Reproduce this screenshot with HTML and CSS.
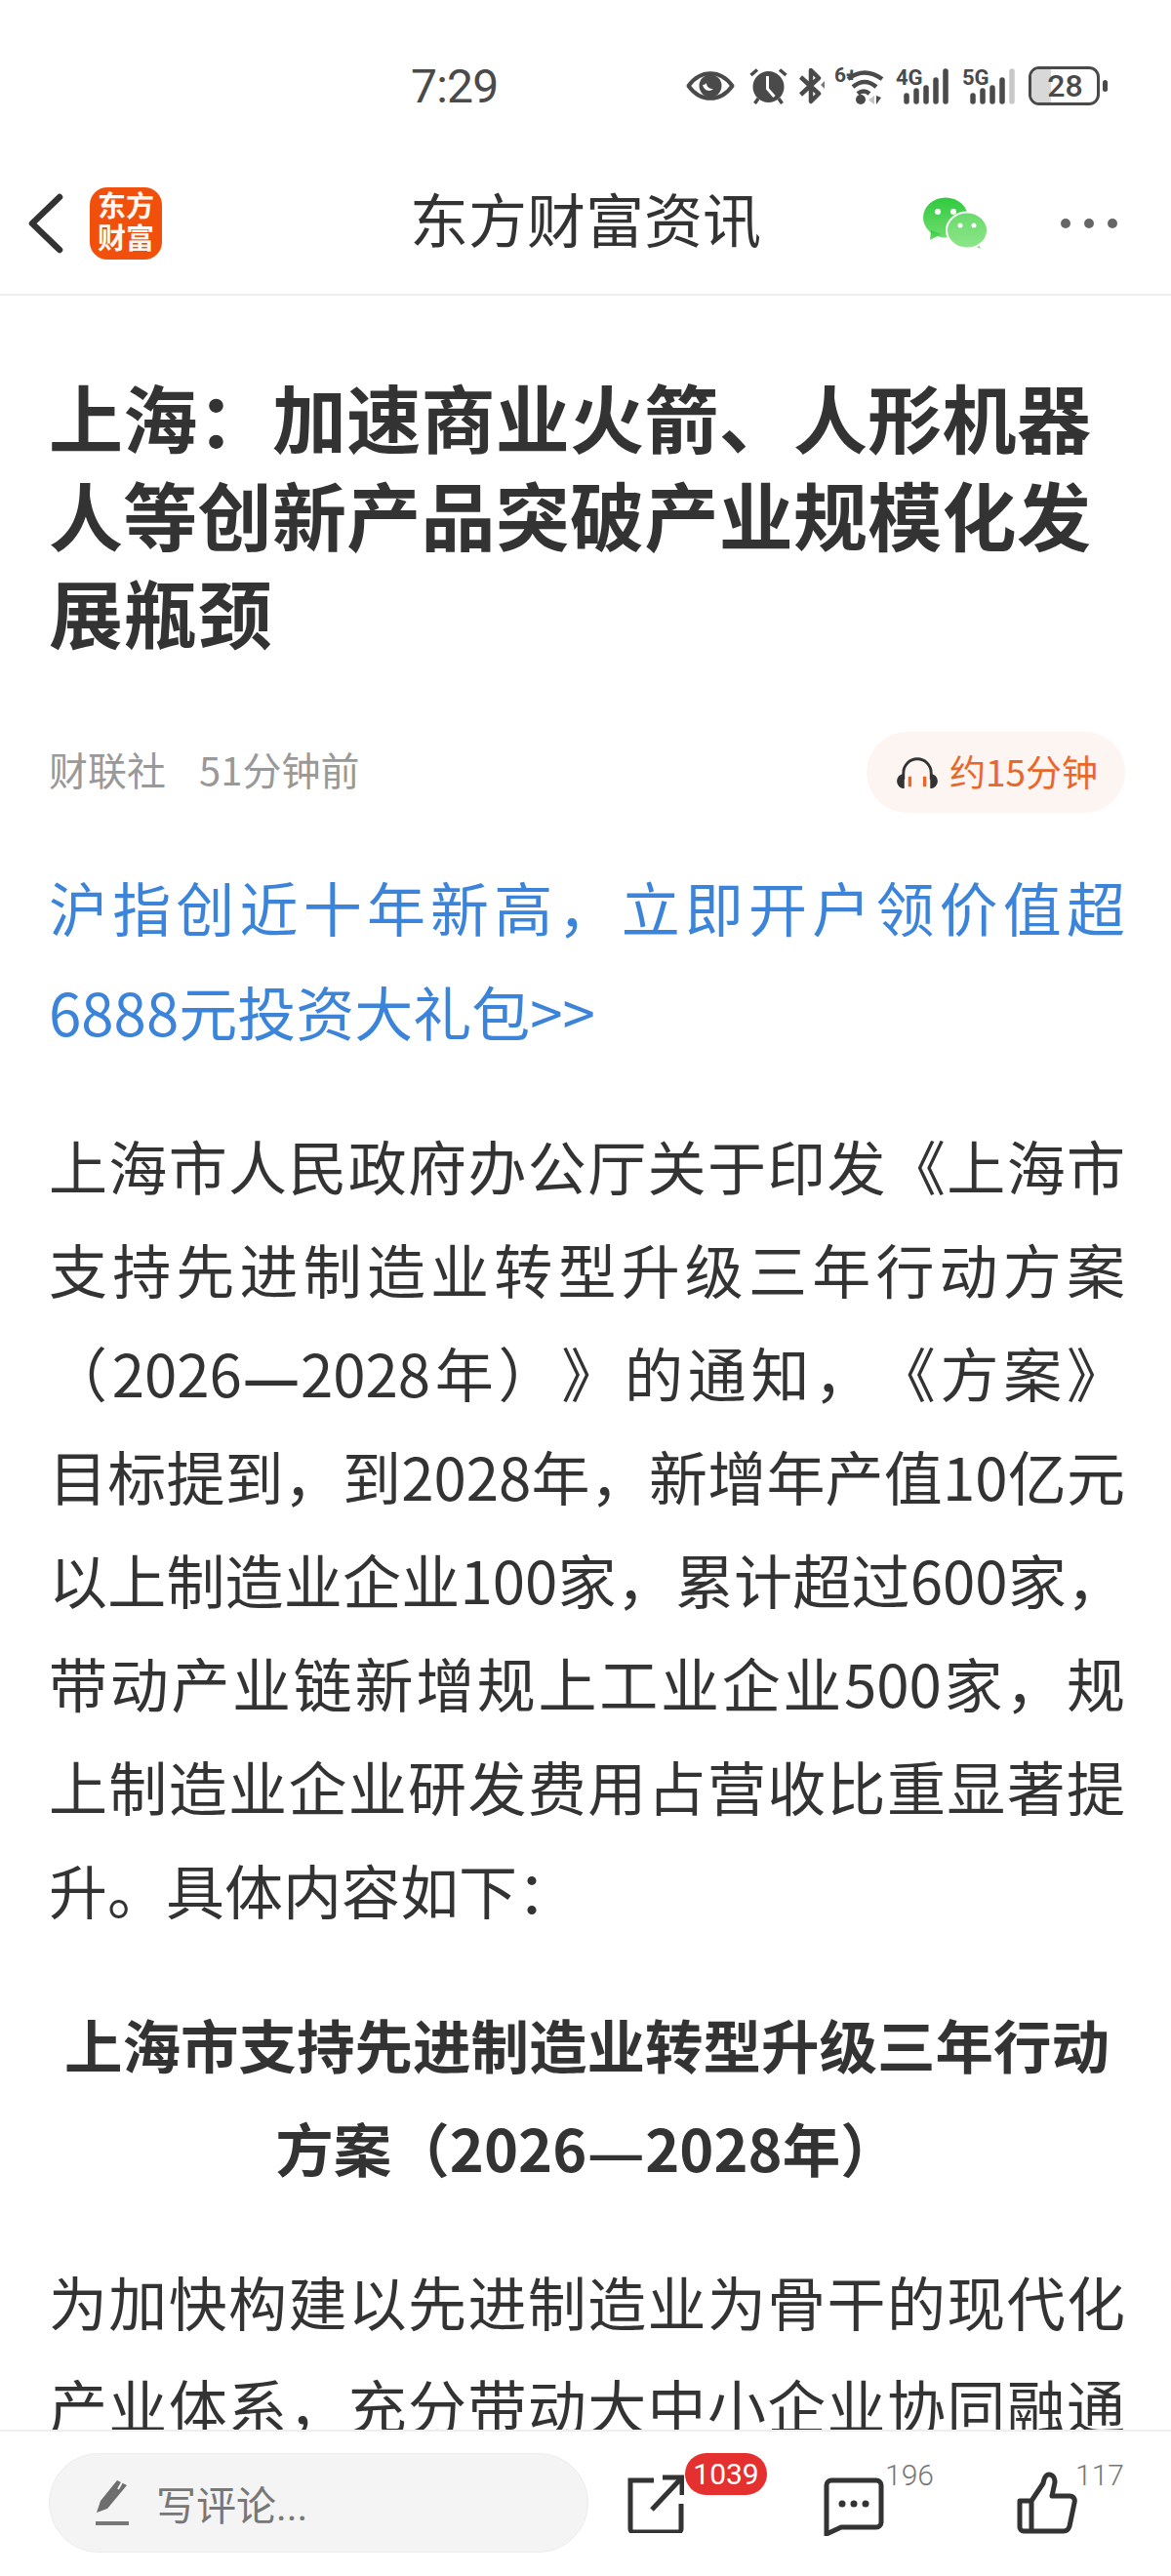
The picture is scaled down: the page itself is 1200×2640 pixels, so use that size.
FILE: index.html
```html
<!DOCTYPE html>
<html lang="zh-CN">
<head>
<meta charset="utf-8">
<title>东方财富资讯</title>
<link rel="stylesheet" href="styles.css">
</head>
<body>
<div class="screen">
  <header class="status">
    <span class="time">7:29</span>
    <div class="status-icons">
      <svg class="i-eye" width="50" height="30" viewBox="0 0 50 30"><path d="M2.500 15C9 6 16 2.200 25 2.200S41 6 47.500 15C41 24 34 27.800 25 27.800S9 24 2.500 15Z" fill="none" stroke="#4a4a4a" stroke-width="4" stroke-linejoin="round"/><circle cx="25" cy="15" r="11.500" fill="#4a4a4a"/><path d="M17 14c2 0 3-1 4-2 0 4 3 6 7 6-3 3-9 3-11-4z" fill="#fff"/></svg>
      <svg class="i-alarm" width="39" height="38" viewBox="0 0 39 38"><circle cx="19.500" cy="20" r="16" fill="#4a4a4a"/><path d="M18.500 9v13l7 8" fill="none" stroke="#fff" stroke-width="3"/><path d="M1.500 8 8 2.500M37.500 8 31 2.500M9 32 5.500 37M30 32 33.500 37" stroke="#4a4a4a" stroke-width="3.500" fill="none"/></svg>
      <svg class="i-bt" width="26" height="38" viewBox="0 0 26 38"><path d="M1.500 10 20 27 12 35V3l8 8L1.500 28" fill="none" stroke="#4a4a4a" stroke-width="4.500" stroke-linejoin="round"/><path d="M26 14v8l-4-4z" fill="#777"/></svg>
      <div class="wifi">
        <span class="tiny six">6+</span>
        <svg width="52" height="40" viewBox="0 0 52 40"><path d="M14 13Q31 0 49 13M19 21Q31 11 43 21M24 28Q30 23 36 28" fill="none" stroke="#4a4a4a" stroke-width="4.500"/><circle cx="27" cy="34" r="5" fill="#4a4a4a"/><path d="M41 30v9l-6-4.500z" fill="#c4c4c4"/><path d="M43 30v9l5-7z" fill="#4a4a4a"/></svg>
      </div>
      <div class="signal">
        <span class="tiny">4G</span>
        <svg width="54" height="40" viewBox="0 0 54 40"><path d="M11 30V36M21 25V36M31 22V36M41 14V36M51 5V36" stroke="#4a4a4a" stroke-width="5.500" stroke-linecap="round"/></svg>
      </div>
      <div class="signal">
        <span class="tiny">5G</span>
        <svg width="54" height="40" viewBox="0 0 54 40"><path d="M11 30V36M21 25V36M31 22V36M41 14V36" stroke="#4a4a4a" stroke-width="5.500" stroke-linecap="round"/><path d="M51 5V36" stroke="#c8c8c8" stroke-width="5.500" stroke-linecap="round"/></svg>
      </div>
      <div class="battery">
        <div class="battery-body"><span class="battery-fill"></span><span class="battery-num">28</span></div>
        <span class="battery-tip"></span>
      </div>
    </div>
  </header>

  <nav class="nav">
    <svg class="back" width="40" height="66" viewBox="0 0 40 66"><path d="M34 6 6 33l28 27" fill="none" stroke="#333" stroke-width="6.500" stroke-linecap="round" stroke-linejoin="round"/></svg>
    <div class="logo">东方<br>财富</div>
    <div class="nav-title">东方财富资讯</div>
    <svg class="wechat" width="68" height="54" viewBox="0 0 68 54">
      <defs>
        <linearGradient id="g1" x1="0" y1="0" x2="0" y2="1"><stop offset="0" stop-color="#2fca3f"/><stop offset="1" stop-color="#6fdc6f"/></linearGradient>
        <linearGradient id="g2" x1="0" y1="0" x2="0" y2="1"><stop offset="0" stop-color="#6ada6c"/><stop offset="1" stop-color="#8ce68a"/></linearGradient>
      </defs>
      <ellipse cx="24" cy="21" rx="23" ry="20.500" fill="url(#g1)"/>
      <path d="M9 34 8 44l12-6z" fill="url(#g1)"/>
      <path d="M56 44l4 9-12-5z" fill="url(#g2)"/>
      <ellipse cx="46" cy="34" rx="21" ry="18.500" fill="url(#g2)" stroke="#fff" stroke-width="2"/>
      <circle cx="16" cy="15" r="3" fill="#fff"/><circle cx="32" cy="15" r="3" fill="#fff"/>
      <circle cx="39" cy="29" r="2.500" fill="#fff"/><circle cx="53" cy="29" r="2.500" fill="#fff"/>
    </svg>
    <div class="dots"><i></i><i></i><i></i></div>
  </nav>

  <main class="article">
    <h1 class="title">上海：加速商业火箭、人形机器人等创新产品突破产业规模化发展瓶颈</h1>
    <div class="meta">
      <span class="source">财联社</span>
      <span class="ago">51分钟前</span>
      <div class="listen">
        <svg width="44" height="36" viewBox="0 0 46 38"><path d="M8 26V19a15 15 0 0 1 30 0v7" fill="none" stroke="#333" stroke-width="3"/><path d="M9 20v16C4 36 1 32 1 28s3-8 8-8zM37 20v16c5 0 8-4 8-8s-3-8-8-8z" fill="#333"/><path d="M15 23v11M31 23v11" stroke="#e8672a" stroke-width="3.500"/></svg>
        <span class="listen-text">约15分钟</span>
      </div>
    </div>
    <p class="promo">沪指创近十年新高，立即开户领价值超6888元投资大礼包&gt;&gt;</p>
    <p class="para">上海市人民政府办公厅关于印发《上海市支持先进制造业转型升级三年行动方案（2026<span class="dash">—</span>2028年）》的通知，《方案》目标提到，到2028年，新增年产值10亿元以上制造业企业100家，累计超过600家，带动产业链新增规上工业企业500家，规上制造业企业研发费用占营收比重显著提升。具体内容如下：</p>
    <h2 class="subhead">上海市支持先进制造业转型升级三年行动方案（2026<span class="dash">—</span>2028年）</h2>
    <p class="para para-cut">为加快构建以先进制造业为骨干的现代化产业体系，充分带动大中小企业协同融通</p>
  </main>

  <footer class="bar">
    <div class="input">
      <svg width="34" height="48" viewBox="0 0 34 48"><path d="M1 34 5 22 22 1l10 5-20 24z" fill="#6e6e6e"/><path d="M27 3l-4 7" stroke="#f4f4f4" stroke-width="2"/><path d="M0 45h34" stroke="#777" stroke-width="4"/></svg>
      <span>写评论...</span>
    </div>
    <div class="action share">
      <svg width="58" height="60" viewBox="0 0 58 60"><path d="M27 6H3v50a3 3 0 0 0 3 3h46a3 3 0 0 0 3-3V30" fill="none" stroke="#333" stroke-width="5"/><path d="M25 36 55 4M36 3h20v18" fill="none" stroke="#333" stroke-width="5"/></svg>
      <span class="badge">1039</span>
    </div>
    <div class="action comment">
      <svg width="62" height="60" viewBox="0 0 62 60"><path d="M8 3h46a5 5 0 0 1 5 5v38a5 5 0 0 1-5 5H18L3 58V8a5 5 0 0 1 5-5z" fill="none" stroke="#333" stroke-width="5"/><circle cx="19" cy="27" r="3.500" fill="#333"/><circle cx="31" cy="27" r="3.500" fill="#333"/><circle cx="43" cy="27" r="3.500" fill="#333"/></svg>
      <span class="count">196</span>
    </div>
    <div class="action like">
      <svg width="62" height="64" viewBox="0 0 62 64"><path d="M3 30h12v31H7a4 4 0 0 1-4-4zM15 30 27 12c1-6 3-9 6-9 4 0 6 4 6 8l-3 14h18c4 0 6 3 5 7l-5 24c-1 3-3 5-6 5H15" fill="none" stroke="#333" stroke-width="5" stroke-linejoin="round"/></svg>
      <span class="count count-like">117</span>
    </div>
  </footer>
</div>
</body>
</html>
```

FILE: styles.css
```css
* { box-sizing: border-box; }
html, body { margin: 0; padding: 0; background: #fff; }
body { font-family: Roboto, "Noto Sans CJK SC", "Noto Sans", sans-serif; color: #333; text-spacing-trim: space-all; }
.screen { width: 1200px; height: 2640px; display: flex; flex-direction: column; overflow: hidden; }

.status { height: 134px; flex: none; display: flex; align-items: flex-start; padding: 68px 60px 0 421px; color: #4a4a4a; }
.time { font-size: 48px; line-height: 42px; width: 282px; flex: none; letter-spacing: -.8px; }
.status-icons { display: flex; align-items: center; height: 40px; }
.status-icons svg { display: block; flex: none; }
.i-alarm { margin-left: 15px; }
.i-bt { margin-left: 12px; }
.wifi { margin-left: 10px; }
.signal { margin-left: 11px; }
.signal + .signal { margin-left: 14px; }
.battery { margin-left: 14px; }
.wifi, .signal { display: flex; position: relative; }
.tiny { font-family: "Liberation Sans Narrow", Roboto, sans-serif; font-size: 22px; line-height: 22px; font-weight: 700; color: #4a4a4a; position: absolute; left: 0; top: 1px; letter-spacing: 0; }
.six { top: -2px; font-size: 21px; }
.battery { display: flex; align-items: center; gap: 3px; }
.battery-body { width: 73px; height: 40px; border: 3px solid #4a4a4a; border-radius: 11px; position: relative; display: flex; align-items: center; justify-content: center; overflow: hidden; }
.battery-fill { position: absolute; left: 0; top: 0; bottom: 0; width: 20px; background: #d8d8d8; }
.battery-num { position: relative; font-size: 32px; line-height: 32px; font-weight: 500; color: #4a4a4a; left: 1px; }
.battery-tip { width: 5px; height: 12px; border-radius: 2.500px; background: #4a4a4a; }

.nav { height: 169px; flex: none; border-bottom: 2px solid #eeeeee; display: flex; align-items: center; padding: 22px 58px 0 27px; }
.back { flex: none; }
.logo { width: 74px; height: 74px; margin-left: 25px; flex: none; border-radius: 18px; background: #f1500c; color: #fff8f2; font-size: 29px; line-height: 33px; font-weight: 700; text-align: center; padding-top: 4px; letter-spacing: 0; }
.nav-title { margin-left: 254px; width: 525px; font-size: 60px; line-height: 70px; color: #333; flex: none; font-weight: 400; }
.wechat { flex: none; }
.dots { margin-left: 74px; display: flex; gap: 14px; flex: none; }
.dots i { width: 10px; height: 10px; border-radius: 50%; background: #666; display: block; }

.article { flex: 1; min-height: 0; overflow: hidden; padding: 73px 47px 0 50px; font-family: "Noto Sans CJK SC", sans-serif; }
.title { margin: 0; font-size: 76px; line-height: 100px; font-weight: 700; color: #333; letter-spacing: .3px; }
.meta { margin-top: 74px; height: 83px; display: flex; align-items: center; font-size: 40px; color: #999; }
.source, .ago { padding-bottom: 8px; }
.ago { margin-left: 34px; }
.listen { margin-left: auto; width: 265px; height: 83px; border-radius: 42px; background: #fdf5f1; display: flex; align-items: center; padding-left: 30px; gap: 11px; color: #e8672a; font-size: 37px; }
.listen-text { padding-bottom: 4px; }
.promo, .para { margin: 0; font-size: 60px; line-height: 106px; text-align: justify; }
.promo { margin-top: 42px; color: #3b84d9; line-height: 107px; }
.para { margin-top: 52px; color: #333; }
.para-cut { text-align-last: justify; }
.subhead { margin: 52px 0 0; font-size: 59.500px; line-height: 106px; font-weight: 700; text-align: center; color: #333; }
.dash { font-family: "Liberation Sans", sans-serif; font-size: 53px; font-weight: 700; line-height: 1; margin: 0 3.500px; }

.bar { height: 150px; flex: none; border-top: 2px solid #eeeeee; background: #fff; display: flex; align-items: flex-start; padding: 22px 0 0 50px; position: relative; }
.input { width: 553px; height: 102px; border-radius: 51px; background: #f4f4f4; border: 1px solid #ececec; display: flex; align-items: center; padding-left: 47px; gap: 28px; color: #777; font-size: 41px; flex: none; }
.input svg { flex: none; }
.action { position: relative; flex: none; }
.action svg { display: block; }
.share { margin: 22px 0 0 40px; width: 58px; }
.comment { margin: 25px 0 0 143px; width: 62px; }
.like { margin: 19px 0 0 136px; width: 62px; }
.badge { position: absolute; left: 59px; top: -22px; width: 84px; height: 43px; border-radius: 22px; background: #e53030; color: #fff; font-size: 30px; line-height: 43px; text-align: center; }
.count { position: absolute; left: 63px; top: -19px; font-size: 30px; line-height: 34px; font-weight: 300; color: #777; }
.count-like { left: 60px; top: -13px; }
```
